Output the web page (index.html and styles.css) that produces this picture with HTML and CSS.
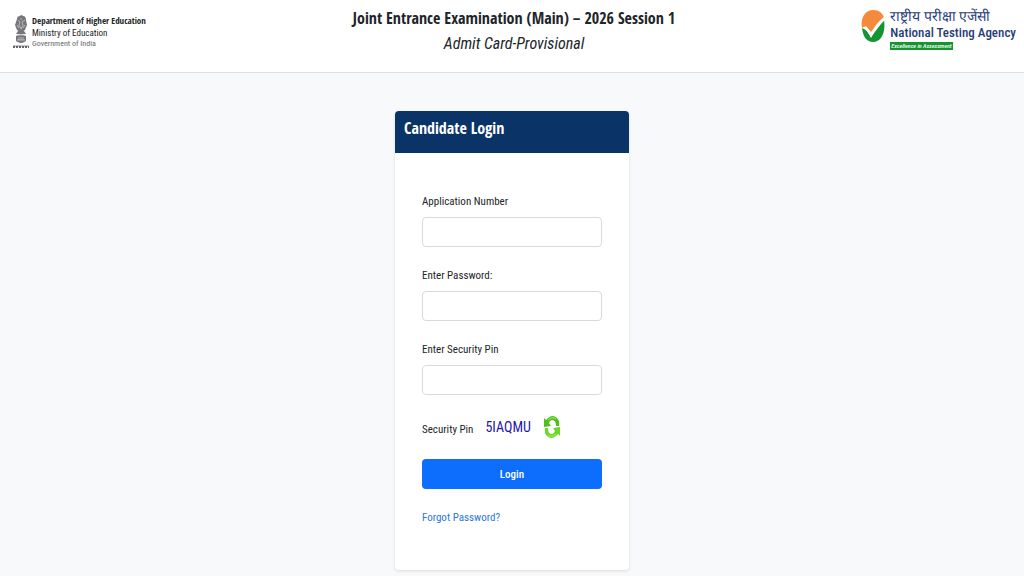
FILE: index.html
```html
<!DOCTYPE html>
<html lang="en">
<head>
<meta charset="utf-8">
<meta name="viewport" content="width=device-width, initial-scale=1">
<title>Candidate Login</title>
<link rel="stylesheet" href="styles.css">
</head>
<body>
<header class="site-header">
  <div class="ministry">
    <svg class="emblem" viewBox="0 0 16 36" aria-hidden="true">
      <g fill="#77777b">
        <path d="M4 4Q4 1 7 1Q8 -1 10 1Q13 1 13 5L14 10L12 15Q8 18 4 15L2 10Z"/>
        <path d="M5 16H11L13 19H3ZM3 21Q8 18 13 21V26Q8 30 3 26Z"/>
      </g>
      <g fill="none" stroke="#c9c9cc" stroke-width=".8">
        <path d="M5 5L7 7L6 10L8 14L10 10L9 7L12 5M4 10L6 13M12 10L10 13M7 4H9"/>
        <path d="M4 20H12M4 25H12M6 22V25M8 22V25M10 22V25"/>
      </g>
      <path d="M0 31H16" stroke="#888" stroke-width="1"/>
      <path d="M0 32H16" stroke="#666" stroke-width="2" stroke-dasharray="2 1"/>
    </svg>
    <div class="ministry-text">
      <strong>Department of Higher Education</strong>
      <span>Ministry of Education</span>
      <small>Government of India</small>
    </div>
  </div>
  <div class="exam">
    <h1>Joint Entrance Examination (Main) – 2026 Session 1</h1>
    <p>Admit Card-Provisional</p>
  </div>
  <div class="agency">
    <svg class="agency-mark" viewBox="0 0 24 34" aria-hidden="true">
      <path d="M1 19C-1 8 5 1 12 1C18 1 22 4 23 9L10 23L5 17Z" fill="#f58a3c"/>
      <path d="M1 19L5 21L10 28L23 11C25 24 20 33 12 33C6 33 2 28 1 19Z" fill="#159532"/>
      <path d="M1 18Q5 17 10 24Q15 14 23 8V12Q16 17 10 29Q6 20 1 18Z" fill="#fff"/>
    </svg>
    <div class="agency-text">
      <span class="agency-hi" lang="hi">राष्ट्रीय परीक्षा एजेंसी</span>
      <strong>National Testing Agency</strong>
      <em>Excellence in Assessment</em>
    </div>
  </div>
</header>
<main class="page">
  <section class="card">
    <h2 class="card-title">Candidate Login</h2>
    <form class="login-form">
      <div class="field">
        <label for="application">Application Number</label>
        <input id="application" type="text">
      </div>
      <div class="field">
        <label for="password">Enter Password:</label>
        <input id="password" type="password">
      </div>
      <div class="field">
        <label for="pin">Enter Security Pin</label>
        <input id="pin" type="text">
      </div>
      <div class="captcha">
        <span class="captcha-label">Security Pin</span>
        <span class="captcha-code">5IAQMU</span>
        <button class="refresh" type="button" aria-label="Refresh security pin">
          <svg viewBox="0 0 18 24" aria-hidden="true">
            <path d="M1 3L3 5Q9-2 14 3Q17 6 16 11H13Q13 5 9 5Q7 5 6 8L8 11L1 12Z" fill="#55bd20"/>
            <path d="M17 21L15 19Q9 26 4 21Q1 18 2 13H5Q5 19 9 19Q11 19 12 16L10 13L17 12Z" fill="#6bd827"/>
            <path d="M5 5Q9 1 13 4M5 20Q9 23 13 19" fill="none" stroke="#a4ee60"/>
          </svg>
        </button>
      </div>
      <button class="login" type="submit">Login</button>
      <a class="forgot" href="#forgot">Forgot Password?</a>
    </form>
  </section>
</main>
</body>
</html>
```
FILE: styles.css
```css
* {
  box-sizing: border-box;
}

body {
  margin: 0;
  background: #f7f9fb;
  color: #212529;
  font-family: "Roboto Condensed", "Open Sans", sans-serif;
  font-size: 11px;
}

.site-header {
  display: grid;
  grid-template-columns: 1fr auto 1fr;
  align-items: start;
  min-height: 73px;
  padding: 5px 8px 0 12px;
  background: #fff;
  border-bottom: 1px solid #dfe1e4;
}

.ministry,
.agency {
  display: flex;
  align-items: flex-start;
}

.ministry {
  gap: 2px;
  padding-top: 10px;
}

.emblem {
  width: 18px;
  height: 36px;
}

.ministry-text,
.agency-text {
  display: flex;
  flex-direction: column;
  align-items: flex-start;
  white-space: nowrap;
}

.ministry-text {
  font-size: 9px;
  line-height: 12px;
}

.ministry-text strong {
  font-family: "Open Sans Condensed", "Open Sans", sans-serif;
}

.ministry-text small {
  color: #66686b;
  font-size: 8px;
  line-height: 10px;
}

.exam {
  text-align: center;
}

.exam h1,
.exam p {
  margin: 0;
  font-size: 16px;
  line-height: 26px;
}

.exam h1 {
  font-family: "Open Sans Condensed", "Open Sans", sans-serif;
  font-weight: 600;
}

.exam p {
  font-style: italic;
}

.agency {
  justify-content: flex-end;
  gap: 5px;
  padding-top: 3px;
}

.agency-mark {
  width: 24px;
  height: 36px;
}

.agency-text {
  color: #263c76;
}

.agency-hi {
  font-size: 14px;
  font-weight: 500;
  line-height: 16px;
}

.agency-text strong {
  font-size: 13px;
  font-weight: 500;
  line-height: 18px;
}

.agency-text em {
  padding: 0 1px;
  background: #159532;
  color: #fff;
  font-size: 6px;
  font-weight: 500;
  line-height: 8px;
}

.page {
  display: flex;
  justify-content: center;
  padding: 38px 0 4px;
}

.card {
  width: 234px;
  max-width: 100%;
  background: #fff;
  border-radius: 4px;
  box-shadow: 0 1px 3px #00000020;
}

.card-title {
  margin: 0;
  padding: 4px 9px 12px;
  border-radius: 4px 4px 0 0;
  background: #0a3368;
  color: #fff;
  font-family: "Open Sans Condensed", "Open Sans", sans-serif;
  font-size: 16px;
  font-weight: 600;
  line-height: 26px;
}

.login-form {
  display: flex;
  flex-direction: column;
  padding: 40px 27px 43px;
}

.field {
  display: flex;
  flex-direction: column;
  gap: 6px;
  margin-bottom: 20px;
}

.field label,
.captcha-label {
  line-height: 18px;
}

.field input {
  width: 100%;
  height: 30px;
  padding: 4px 8px;
  border: 1px solid #d6d9dd;
  border-radius: 4px;
  background: #fff;
  font: inherit;
}

.captcha {
  display: flex;
  align-items: center;
  gap: 12px;
  height: 24px;
  margin-bottom: 20px;
}

.captcha-label {
  align-self: flex-end;
}

.captcha-code {
  color: #2316ad;
  font-size: 14px;
}

.refresh {
  width: 18px;
  height: 24px;
  padding: 0;
  border: 0;
  background: none;
}

.refresh svg {
  display: block;
  width: 100%;
  height: 100%;
}

.login {
  height: 30px;
  border: 0;
  border-radius: 4px;
  background: #0d6efd;
  color: #fff;
  font: inherit;
  font-weight: 500;
}

.forgot {
  align-self: flex-start;
  margin-top: 20px;
  color: #2d76dc;
  line-height: 18px;
  text-decoration: none;
}
```
